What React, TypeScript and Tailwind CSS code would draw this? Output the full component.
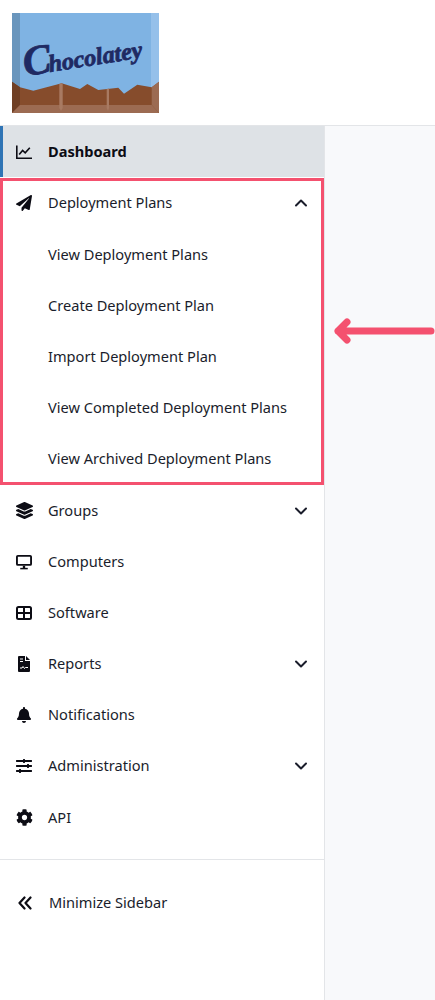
import React from "react";
import { FaBell, FaCog, FaLayerGroup, FaPaperPlane, FaSlidersH } from "react-icons/fa";

const Logo = () => (
  <svg width="147" height="100" viewBox="0 0 147 100">
    <rect width="147" height="100" fill="#7fb3e3" />
    <rect width="8" height="75" fill="#6a96bd" />
    <rect x="139" width="8" height="75" fill="#95c0ea" />
    <polygon points="0,68.7 8,74.3 21.3,77.7 49.7,70.3 68,76 75.3,71 86.3,77 106.3,74.7 112,80.7 125.3,71.7 139.7,74.3 147,68.7 147,100 0,100" fill="#864c2c" />
    <polygon points="0,68.7 8,74.3 8,92 0,100" fill="#6f3f24" />
    <polygon points="139.7,74.3 147,68.7 147,100 139.7,92" fill="#9c6b52" />
    <polygon points="8,92 139.7,92 147,100 0,100" fill="#9c6b52" />
    <polygon points="47.3,70.9 49.7,70.3 50.7,71 50.7,95 49,98 47.3,95" fill="#a87a62" />
    <polygon points="94.7,75.9 97,75.6 97,95 96,98 94.7,95" fill="#a87a62" />
    <text
      x="13"
      y="63"
      transform="rotate(-9 13 63)"
      fill="#1f2a63"
      stroke="#1f2a63"
      strokeWidth="0.8"
      fontWeight="700"
      fontStyle="italic"
      fontFamily="'Liberation Serif', serif"
    >
      <tspan fontSize="42">C</tspan>
      <tspan fontSize="24" dx="-3">
        hocolatey
      </tspan>
    </text>
  </svg>
);

const ChartIcon = () => (
  <svg width="16" height="16" viewBox="0 0 16 16" fill="none" stroke="currentColor" strokeWidth="1.6">
    <path d="M.8 1.5v12.7H16" />
    <path d="M3.2 10.5 6.6 6.4l2.6 2.5 4.6-5.2" />
  </svg>
);

const MonitorIcon = () => (
  <svg width="17" height="16" viewBox="0 0 17 16" fill="none" stroke="currentColor">
    <rect x="1" y="1.5" width="15" height="9.5" rx="1" strokeWidth="2" />
    <path d="M8.5 12v2.5" strokeWidth="2.5" />
    <path d="M4.5 15h8" strokeWidth="1.6" />
  </svg>
);

const GridIcon = () => (
  <svg width="16" height="16" viewBox="0 0 16 16" fill="none" stroke="currentColor" strokeWidth="2">
    <rect x="1" y="2" width="14" height="12" rx="1.5" />
    <path d="M8 2v12M1 8h14" />
  </svg>
);

const ReportIcon = () => (
  <svg width="12" height="16" viewBox="0 0 12 16">
    <path d="M1 0h6v5h5v10a1 1 0 0 1-1 1H1a1 1 0 0 1-1-1V1a1 1 0 0 1 1-1Zm7 0 4 4H8V0Z" fill="currentColor" />
    <path d="M2 3h3M2 5.5h3" stroke="#fff" strokeWidth="1" />
    <path d="M2 12h2l1-1.5 1.5 2 1-1H10" stroke="#fff" strokeWidth="1" fill="none" />
  </svg>
);

const Chevron = ({ up }: { up?: boolean }) => (
  <svg width="14" height="14" viewBox="0 0 14 14" fill="none" stroke="currentColor" strokeWidth="2" strokeLinecap="round" strokeLinejoin="round">
    <path d={up ? "M2 9.5 7 4.5l5 5" : "M2 4.5l5 5 5-5"} />
  </svg>
);

const DoubleAngle = () => (
  <svg width="14" height="14" viewBox="0 0 14 14" fill="none" stroke="currentColor" strokeWidth="2.2" strokeLinecap="round" strokeLinejoin="round">
    <path d="M6.5 1.5 1.5 7l5 5.5M12.5 1.5 7.5 7l5 5.5" />
  </svg>
);

const Row = ({ icon, label, chevron }: { icon?: React.ReactNode; label: string; chevron?: "up" | "down" }) => (
  <div className="flex h-[51px] items-center pr-[16px]">
    <span className="flex w-[48px] shrink-0 pl-[16px] text-[#0c0c14]">
      <span className="flex w-[16px] justify-center">{icon}</span>
    </span>
    <span className="flex-1 text-[14.6px]">{label}</span>
    {chevron && <Chevron up={chevron === "up"} />}
  </div>
);

export default function App() {
  return (
    <div className="relative flex h-[1000px] w-[435px] flex-col overflow-hidden bg-white font-['Noto_Sans',sans-serif] text-[#1a1d2b]">
      <header className="h-[126px] shrink-0 border-b border-[#e3e5e8] pl-[12px] pt-[13px]">
        <Logo />
      </header>
      <div className="flex flex-1">
        <nav className="w-[325px] shrink-0 border-r border-[#e3e5e8] bg-white">
          <div className="flex h-[51px] items-center border-l-[3px] border-[#2f74b5] bg-[#dee2e6] pl-[13px] text-[#0c0c14]">
            <span className="w-[32px] shrink-0">
              <ChartIcon />
            </span>
            <span className="text-[14.6px] font-bold">Dashboard</span>
          </div>

          <div className="h-[307px]">
            <Row icon={<FaPaperPlane className="shrink-0 text-[16px]" />} label="Deployment Plans" chevron="up" />
            <div className="pt-[1px]">
              <Row label="View Deployment Plans" />
              <Row label="Create Deployment Plan" />
              <Row label="Import Deployment Plan" />
              <Row label="View Completed Deployment Plans" />
              <Row label="View Archived Deployment Plans" />
            </div>
          </div>

          <div className="pt-[1px]">
            <Row icon={<FaLayerGroup className="shrink-0 text-[17px]" />} label="Groups" chevron="down" />
            <Row icon={<MonitorIcon />} label="Computers" />
            <Row icon={<GridIcon />} label="Software" />
            <Row icon={<ReportIcon />} label="Reports" chevron="down" />
            <Row icon={<FaBell className="shrink-0 text-[16px]" />} label="Notifications" />
            <Row icon={<FaSlidersH className="shrink-0 text-[16px]" />} label="Administration" chevron="down" />
            <div className="pt-[1px]">
              <Row icon={<FaCog className="shrink-0 text-[17px]" />} label="API" />
            </div>
          </div>

          <div className="mt-[16px] flex h-[86px] items-center gap-[17px] border-t border-[#e3e5e8] pl-[18px] text-[#0c0c14]">
            <DoubleAngle />
            <span className="text-[14.6px] text-[#1a1d2b]">Minimize Sidebar</span>
          </div>
        </nav>
        <main className="flex-1 bg-[#f8f9fb]" />
      </div>

      {/* annotation over the screenshot */}
      <div className="absolute left-0 top-[178px] h-[307px] w-[324px] border-[3px] border-[#f4516f]" />
      <svg className="absolute left-[333px] top-[318px]" width="102" height="26" viewBox="0 0 102 26" fill="none" stroke="#f4516f" strokeWidth="7" strokeLinecap="round" strokeLinejoin="round">
        <path d="M98 13H5M14 4l-9 9 9 9" />
      </svg>
    </div>
  );
}
